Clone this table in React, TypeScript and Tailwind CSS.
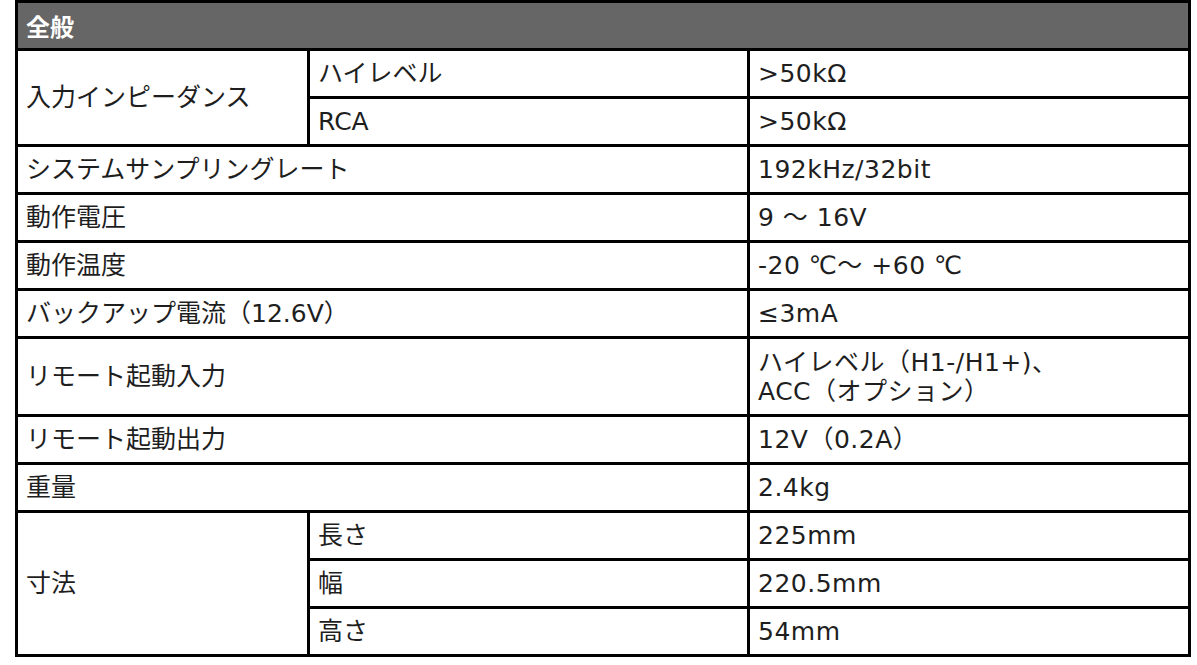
const rows: { label: string; value: string[]; h?: string }[] = [
  { label: "システムサンプリングレート", value: ["192kHz/32bit"] },
  { label: "動作電圧", value: ["9 ～ 16V"] },
  { label: "動作温度", value: ["-20 ℃～ +60 ℃"] },
  { label: "バックアップ電流（12.6V）", value: ["≤3mA"] },
  { label: "リモート起動入力", value: ["ハイレベル（H1-/H1+)、", "ACC（オプション）"], h: "h-[78px]" },
  { label: "リモート起動出力", value: ["12V（0.2A）"] },
  { label: "重量", value: ["2.4kg"] },
];

const cell = "border-[3px] border-black px-[8px] align-middle";
const val = `${cell} tracking-[0.5px]`;

export default function App() {
  return (
    <div className="min-h-screen bg-white pl-[15px] font-['DejaVu_Sans','Noto_Sans_CJK_JP',sans-serif] text-[25px] leading-[29px] text-[#1e1e1e]">
      <table className="table-fixed border-collapse w-[1173px]">
        <colgroup>
          <col className="w-[292px]" />
          <col className="w-[440px]" />
          <col className="w-[441px]" />
        </colgroup>
        <tbody>
          <tr className="h-[48px]">
            <td
              colSpan={3}
              className={`${cell} bg-[#666666] font-['Noto_Sans_CJK_JP',sans-serif] text-[24px] font-bold text-white`}
            >
              全般
            </td>
          </tr>
          <tr className="h-[48px]">
            <td rowSpan={2} className={cell}>入力インピーダンス</td>
            <td className={cell}>ハイレベル</td>
            <td className={val}>&gt;50kΩ</td>
          </tr>
          <tr className="h-[48px]">
            <td className={cell}>RCA</td>
            <td className={val}>&gt;50kΩ</td>
          </tr>
          {rows.map((r) => (
            <tr key={r.label} className={r.h ?? "h-[48px]"}>
              <td colSpan={2} className={cell}>{r.label}</td>
              <td className={val}>
                {r.value.map((v) => (
                  <div key={v}>{v}</div>
                ))}
              </td>
            </tr>
          ))}
          <tr className="h-[48px]">
            <td rowSpan={3} className={cell}>寸法</td>
            <td className={cell}>長さ</td>
            <td className={val}>225mm</td>
          </tr>
          <tr className="h-[48px]">
            <td className={cell}>幅</td>
            <td className={val}>220.5mm</td>
          </tr>
          <tr className="h-[48px]">
            <td className={cell}>高さ</td>
            <td className={val}>54mm</td>
          </tr>
        </tbody>
      </table>
    </div>
  );
}
